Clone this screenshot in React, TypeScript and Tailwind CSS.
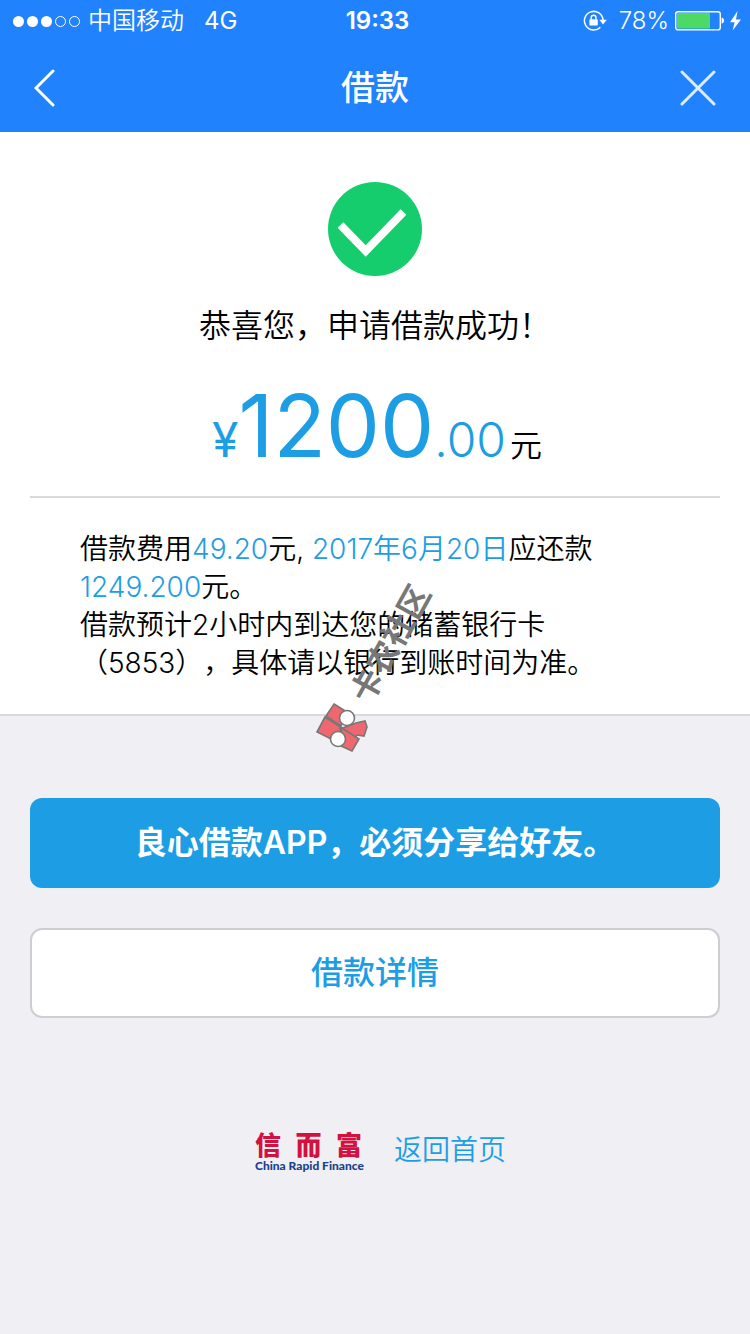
import React from 'react';

const SIGNAL_STRENGTH = 3;

const SignalDots: React.FC = () => (
  <div className="flex items-center gap-[3px]">
    {[1, 2, 3, 4, 5].map(n => (
      <span
        key={n}
        className={
          n <= SIGNAL_STRENGTH
            ? 'h-[11px] w-[11px] rounded-full bg-white'
            : 'h-[11px] w-[11px] rounded-full border border-white'
        }
      />
    ))}
  </div>
);

const RotationLockIcon: React.FC = () => (
  <svg width="24" height="22" viewBox="0 0 24 22" fill="none" aria-hidden="true">
    <path d="M17.4 17.2A9.3 9.3 0 1 1 20 10" stroke="#fff" strokeWidth="1.5" />
    <path d="M16.4 9.8h7.4L20 14.6z" fill="#fff" />
    <rect x="6.4" y="9.2" width="8.4" height="6.4" rx="0.8" fill="#fff" />
    <path d="M8.2 9.6V7.6a2.4 2.4 0 0 1 4.8 0v2" stroke="#fff" strokeWidth="1.4" />
  </svg>
);

const BatteryIcon: React.FC = () => (
  <svg width="67" height="22" viewBox="0 0 67 22" fill="none" aria-hidden="true">
    <rect x="0.7" y="1.7" width="44.6" height="18.2" rx="2.4" stroke="#fff" strokeWidth="1.4" />
    <rect x="2" y="3" width="33" height="15.6" rx="1" fill="#4cd964" />
    <path d="M46.6 7.4c1.6.3 2.4 1.6 2.4 3.2s-.8 2.9-2.4 3.2z" fill="#fff" />
    <path d="M62.6 1L55 12.2h4.6L57.6 20.6l8.4-11.2h-5z" fill="#fff" />
  </svg>
);

const StatusBar: React.FC = () => (
  <div className="grid h-11 grid-cols-3 items-start pt-[5px] pr-2 pl-[13px] text-2xl leading-8 text-white">
    <div className="flex items-center gap-2 whitespace-nowrap">
      <SignalDots />
      <span className="font-[350]">中国移动</span>
      <span className="ml-3">4G</span>
    </div>
    <span className="text-center font-semibold">19:33</span>
    <div className="flex items-center justify-end">
      <RotationLockIcon />
      <span className="mr-[6px] ml-3 font-[350]">78%</span>
      <BatteryIcon />
    </div>
  </div>
);

const NavBar: React.FC = () => (
  <div className="flex h-[88px] items-center justify-between px-[34px] text-white">
    <button type="button" aria-label="返回" className="w-9">
      <svg width="22" height="38" viewBox="0 0 22 38" fill="none">
        <path d="M19 2L2 19l17 17" stroke="#fff" strokeWidth="3" strokeLinecap="round" />
      </svg>
    </button>
    <h1 className="text-[34px] leading-[48px] font-medium">借款</h1>
    <button type="button" aria-label="关闭" className="w-9">
      <svg width="36" height="38" viewBox="0 0 36 38" fill="none">
        <path d="M2 3l32 32M34 3L2 35" stroke="#fff" strokeOpacity="0.85" strokeWidth="3" strokeLinecap="round" />
      </svg>
    </button>
  </div>
);

const SuccessIcon: React.FC = () => (
  <svg width="94" height="94" viewBox="0 0 94 94" fill="none" className="mx-auto" aria-hidden="true">
    <circle cx="47" cy="47" r="47" fill="#15cd6d" />
    <path d="M12.5 43L37.7 69 75.5 30" stroke="#fff" strokeWidth="8" />
  </svg>
);

const Blue: React.FC<{ children: React.ReactNode }> = ({ children }) => (
  <span className="text-[#1d9ee4]">{children}</span>
);

const Watermark: React.FC = () => (
  <div className="pointer-events-none absolute -bottom-[38px] left-1/2 h-[174px] w-32 -translate-x-1/2">
    <div className="absolute bottom-0 left-1">
      <svg width="54" height="50" viewBox="0 0 54 50" aria-hidden="true">
        <g stroke="#777" strokeWidth="1.6">
          <path d="M19 2l13 8-6 14-15-10z" fill="#f0686f" />
          <path d="M10 15l17 11-7 13L2 30z" fill="#f0686f" />
          <path d="M25 27l16-6 9-2 2 6-3 9-7-1-2 3z" fill="#f0686f" />
          <path d="M27 26l17 11-7 12-13-6z" fill="#f0686f" />
          <circle cx="32" cy="16" r="7.5" fill="#fff" />
          <circle cx="23" cy="37" r="7.5" fill="#fff" />
        </g>
      </svg>
    </div>
    <span className="absolute top-[50px] left-4 -rotate-[61deg] text-[32px] leading-8 font-bold whitespace-nowrap text-[#777]">
      卡农社区
    </span>
  </div>
);

const ResultPanel: React.FC = () => (
  <section className="relative border-b-2 border-[#d9d9dc] bg-white pt-[50px] pb-8">
    <SuccessIcon />
    <h2 className="mt-[26px] text-center text-[32px] leading-[48px] font-[350]">恭喜您，申请借款成功！</h2>
    <div className="mx-[30px] flex items-baseline justify-center border-b-2 border-[#d9d9dc] pt-9 pb-[10px] pl-1 leading-[80px]">
      <span className="text-5xl leading-[80px] text-[#1d9ee4]">¥</span>
      <span className="text-[86px] text-[#1d9ee4]">1200</span>
      <span className="text-5xl leading-[80px] font-[350] text-[#1d9ee4]">.00</span>
      <span className="ml-1 text-[32px] font-[350]">元</span>
    </div>
    <div className="mt-8 px-20 text-[28px] leading-[38px] font-[350] [text-spacing-trim:space-all]">
      <p>
        借款费用<Blue>49.20</Blue>元, <Blue>2017年6月20日</Blue>应还款<Blue>1249.200</Blue>元。
      </p>
      <p>借款预计2小时内到达您的储蓄银行卡（5853），具体请以银行到账时间为准。</p>
    </div>
    <Watermark />
  </section>
);

const BrandLogo: React.FC = () => (
  <div className="w-[107px] pt-1">
    <div className="flex justify-between text-[26px] leading-7 font-black text-[#d3103f]">
      <span>信</span>
      <span>而</span>
      <span>富</span>
    </div>
    <div className="font-['Lato'] text-[12px] leading-3 font-black whitespace-nowrap text-[#1b3f8b]">
      China Rapid Finance
    </div>
  </div>
);

export default function App() {
  return (
    <div
      lang="zh-CN"
      className="min-h-screen bg-[#efeff4] font-['Inter','Noto_Sans_CJK_SC',sans-serif] text-black"
    >
      <header className="bg-[#2182fe]">
        <StatusBar />
        <NavBar />
      </header>

      <main>
        <ResultPanel />

        <div className="mt-[82px] flex flex-col gap-10 px-[30px]">
          <button
            type="button"
            className="h-[90px] rounded-xl bg-[#1d9ee4] text-[32px] font-semibold text-white"
          >
            良心借款APP，必须分享给好友。
          </button>
          <button
            type="button"
            className="h-[90px] rounded-xl border-2 border-[#ceced2] bg-white text-[32px] font-medium text-[#1d9ee4]"
          >
            借款详情
          </button>
        </div>
      </main>

      <footer className="mt-[110px] flex items-center justify-center gap-8 pl-[11px]">
        <BrandLogo />
        <a href="#home" className="text-[28px] leading-10 font-[350] text-[#1d9ee4]">
          返回首页
        </a>
      </footer>
    </div>
  );
}
